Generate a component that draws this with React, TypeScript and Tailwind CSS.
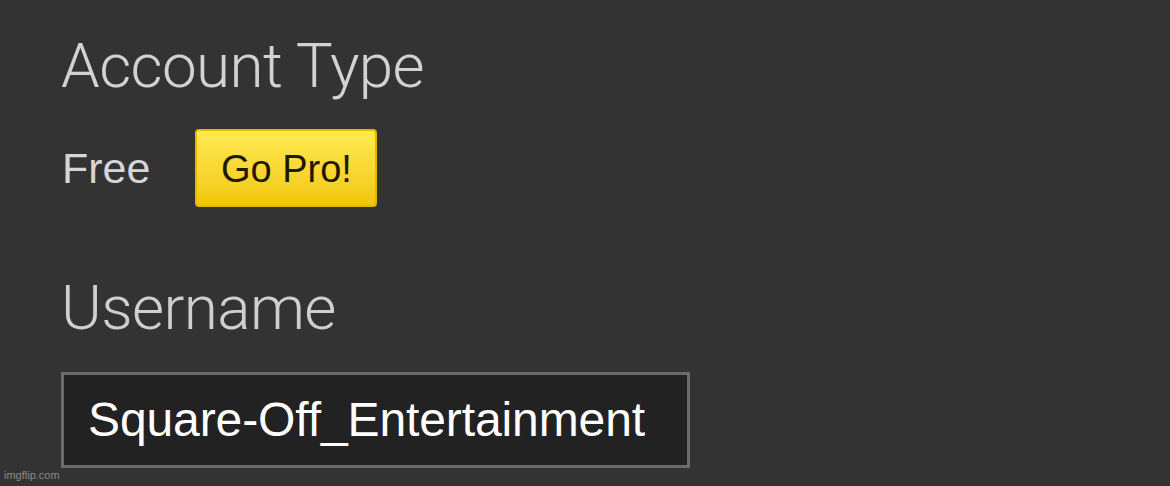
export default function App() {
  return (
    <div className="relative w-[1170px] h-[486px] overflow-hidden bg-[#333333] font-['Liberation_Sans',Arial,sans-serif]">
      <div className="flex flex-col pl-[61px] pt-[28px]">
        <h2 className="font-['Roboto',sans-serif] font-light text-[62px] leading-[76px] text-[#d2d2d2] tracking-[-0.6px]">
          Account Type
        </h2>
        <div className="mt-[25px] flex items-center gap-[45px]">
          <span className="text-[43px] leading-none text-[#d6d6d6] pl-[1px]">Free</span>
          <button className="w-[182px] h-[78px] rounded-[4px] border-2 border-[#e2b900] bg-gradient-to-b from-[#ffea50] to-[#f2c700] text-[38px] text-[#1e1a00] pt-[2px]">
            Go Pro!
          </button>
        </div>
        <h2 className="mt-[63px] font-['Roboto',sans-serif] font-light text-[62px] leading-[76px] text-[#cfcfcf] tracking-[-0.6px]">
          Username
        </h2>
        <div className="mt-[26px] w-[629px] h-[96px] border-[3px] border-[#6b6b6b] bg-[#222222] flex items-center pl-[24px]">
          <span className="text-[48px] leading-none text-white tracking-[-0.1px]">Square-Off_Entertainment</span>
        </div>
      </div>
      <span className="absolute left-[4px] bottom-[3px] text-[11px] text-[#8a8a8a]">imgflip.com</span>
    </div>
  );
}
